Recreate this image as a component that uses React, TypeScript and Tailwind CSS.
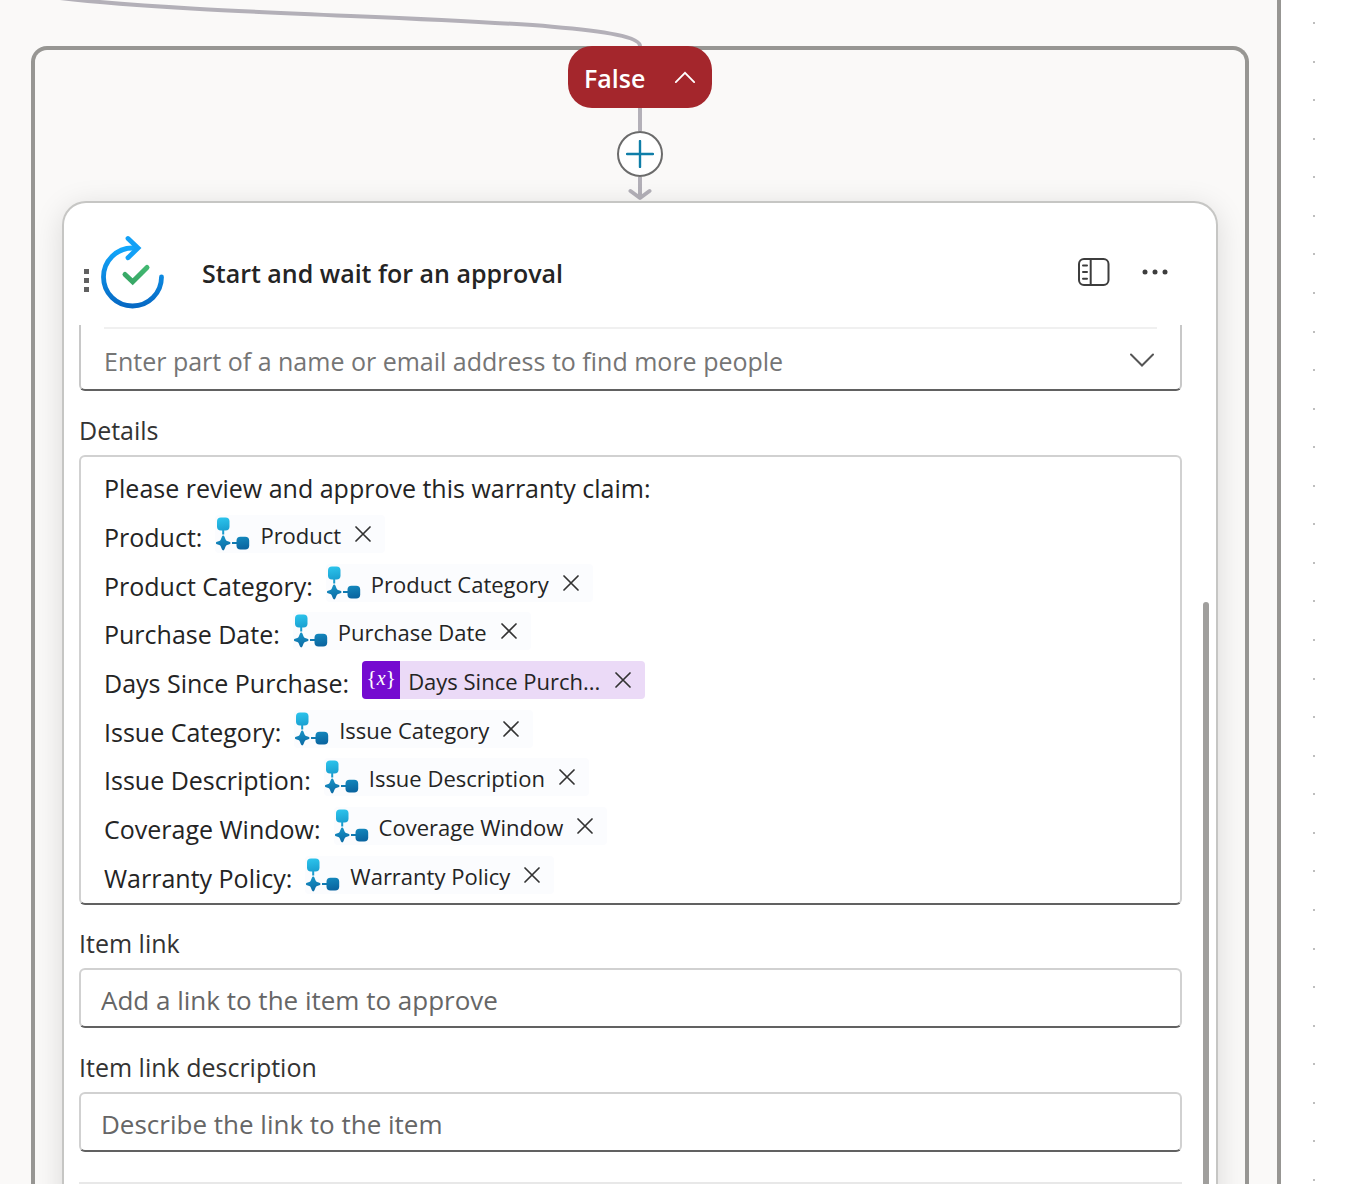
import { useId } from "react";

function Chevron({ up = false, className }: { up?: boolean; className: string }) {
  return (
    <svg viewBox="0 0 24 14" className={className} fill="none" stroke="currentColor" strokeWidth="2" strokeLinecap="round" aria-hidden="true">
      <path d={up ? "M2 12 12 2l10 10" : "M1 1.500 12 12.500 23 1.500"} />
    </svg>
  );
}

function ApprovalLogo() {
  return (
    <svg viewBox="0 0 66 74" className="h-[74px] w-[66px] shrink-0" fill="none" aria-hidden="true">
      <defs>
        <linearGradient id="ring" x1="0" y1="0" x2="0" y2="1">
          <stop offset="0" stopColor="#12a7fb" />
          <stop offset="1" stopColor="#0669c4" />
        </linearGradient>
        <linearGradient id="tick" x1="1" y1="0" x2="0" y2="1">
          <stop offset="0" stopColor="#42b871" />
          <stop offset="1" stopColor="#36a564" />
        </linearGradient>
      </defs>
      <path d="M36 13H32.500A29 29 0 1 0 61.500 42" stroke="url(#ring)" strokeWidth="4.800" strokeLinecap="round" />
      <path d="M28 3.500 38 13 28 22.800" stroke="#12a0f6" strokeWidth="4.800" strokeLinecap="round" strokeLinejoin="miter" />
      <path d="M25 39.500 32.700 46.800 47 32.500" stroke="url(#tick)" strokeWidth="5" strokeLinecap="round" />
    </svg>
  );
}

function FlowIcon() {
  const id = useId();
  return (
    <svg viewBox="0 0 34 34" className="h-[34px] w-[34px] shrink-0" aria-hidden="true">
      <defs>
        <linearGradient id={id} gradientUnits="userSpaceOnUse" x1="8" y1="0" x2="14" y2="34">
          <stop offset="0" stopColor="#2cc4ec" />
          <stop offset="0.4" stopColor="#1a9fd0" />
          <stop offset="1" stopColor="#0a65a0" />
        </linearGradient>
      </defs>
      <g fill={`url(#${id})`}>
        <rect x="1" y="0.500" width="12.500" height="13" rx="4" />
        <path d="M6.200 13h2v4.500h-2zM16 25h5v2h-5z" />
        <rect x="20.500" y="19.800" width="12.700" height="12.700" rx="4" />
        <path d="M7.200 18.500c.6 0 1 .4 1.300 1.200l1.100 2.700c.3.800.8 1.200 1.500 1.500l2.300.9c1.500.6 1.500 1.800 0 2.400l-2.300.9c-.7.300-1.200.8-1.500 1.500l-1.100 2.700c-.6 1.500-2 1.500-2.600 0l-1.100-2.700c-.3-.7-.8-1.200-1.500-1.500l-2.300-.9c-1.500-.6-1.500-1.800 0-2.400l2.300-.9c.7-.3 1.200-.7 1.500-1.500l1.100-2.700c.3-.8.700-1.200 1.300-1.200Z" />
      </g>
    </svg>
  );
}

function RemoveButton({ label, className }: { label: string; className: string }) {
  return (
    <button type="button" aria-label={`Remove ${label}`} className={className}>
      <svg viewBox="0 0 16 16" className="size-4" fill="none" stroke="#333" strokeWidth="1.700" strokeLinecap="round" aria-hidden="true">
        <path d="m1 1 14 14M15 1 1 15" />
      </svg>
    </button>
  );
}

function FlowToken({ label }: { label: string }) {
  return (
    <span className="mb-1.5 ml-[13px] flex h-[38px] items-center rounded bg-[#fbfcfe] pr-3.5 pl-px">
      <FlowIcon />
      <span className="ml-2.5 pt-0.5 text-[22px] leading-[34px]">{label}</span>
      <RemoveButton label={label} className="ml-3.5 flex" />
    </span>
  );
}

function VariableToken({ label }: { label: string }) {
  return (
    <span className="mb-1.5 ml-[13px] flex h-[38px] items-center overflow-hidden rounded bg-[#ebdaf7]">
      <span className="flex h-full w-[38px] items-center justify-center bg-[#750bd0] pb-1 font-['Liberation_Serif',serif] text-[22px] text-white">
        {"{"}
        <i className="text-[20px]">x</i>
        {"}"}
      </span>
      <span className="ml-2 w-[193px] whitespace-nowrap pt-0.5 text-[22px] leading-[34px]">{label}</span>
      <RemoveButton label={label} className="mx-3.5 flex" />
    </span>
  );
}

const claimFields = [
  { name: "Product" },
  { name: "Product Category" },
  { name: "Purchase Date" },
  { name: "Days Since Purchase", variable: "Days Since Purch..." },
  { name: "Issue Category" },
  { name: "Issue Description" },
  { name: "Coverage Window" },
  { name: "Warranty Policy" },
];

const inputClass =
  "mt-[7px] block h-[60px] w-full rounded-md border-2 border-[#d1d1d1] border-b-[#616161] bg-white pt-1 pl-5 text-[26px] text-[#242424] outline-none placeholder:text-[#666]";

export default function App() {
  return (
    <div className="flex h-screen overflow-hidden bg-white font-['Open_Sans',sans-serif] text-[#242424]">
      <main className="flex min-w-0 flex-1 border-r-4 border-[#979693] bg-[#faf9f8] pt-[46px] pr-7 pl-[31px]">
        <section className="relative min-w-0 flex-1 rounded-t-2xl border-4 border-b-0 border-[#979693] px-[27px]">
          <div className="relative -mt-1 flex flex-col items-center">
            <svg viewBox="0 0 640 46" className="absolute right-1/2 bottom-full h-[46px] w-[640px] overflow-visible" fill="none" aria-hidden="true">
              <path d="M60 -2C250 20 640 16 640 46" stroke="#b3b0b8" strokeWidth="4" />
            </svg>
            <button type="button" className="relative flex h-[62px] w-36 items-center justify-between rounded-3xl bg-[#a4262c] px-4 text-[25px] font-semibold text-white">
              <span className="pt-1">False</span>
              <Chevron up className="h-[13px] w-[22px]" />
            </button>
            <span className="h-[23px] w-1 bg-[#b3b0b8]" />
            <button type="button" aria-label="Insert a new step" className="flex size-[46px] items-center justify-center rounded-full border-2 border-[#6b6b6b] bg-white">
              <svg viewBox="0 0 28 28" className="size-7" stroke="#0f7ea8" strokeWidth="2.400" strokeLinecap="round" aria-hidden="true">
                <path d="M14 1v26M1 14h26" />
              </svg>
            </button>
            <svg viewBox="0 0 24 24" className="h-6 w-6" fill="none" stroke="#b3b0b8" strokeWidth="4" aria-hidden="true">
              <path d="M12 0v21" />
              <path d="m2.500 14 9.500 7 9.500-7" strokeLinecap="round" strokeLinejoin="round" />
            </svg>
          </div>

          <article className="relative h-full rounded-t-3xl border-2 border-b-0 border-[#c6c6c4] bg-white shadow-[0_6px_30px_rgba(0,0,0,0.13)]">
            <header className="flex h-[122px] items-center pt-4 pr-12 pl-5">
              <span className="mt-4 flex w-[5px] flex-col gap-1" aria-hidden="true">
                <span className="size-[5px] bg-[#616161]" />
                <span className="size-[5px] bg-[#616161]" />
                <span className="size-[5px] bg-[#616161]" />
              </span>
              <div className="ml-[11px] flex">
                <ApprovalLogo />
              </div>
              <h1 className="ml-9 pt-0.5 text-[25px] leading-9 font-semibold">Start and wait for an approval</h1>
              <button type="button" aria-label="Pin panel" className="ml-auto">
                <svg viewBox="0 0 32 28" className="h-7 w-8" fill="none" stroke="#3d3d3d" strokeWidth="2" aria-hidden="true">
                  <rect x="1" y="1" width="29.500" height="26" rx="5" />
                  <path d="M12.700 1v26" />
                  <path d="M5 7.500h4M5 14h4M5 20.700h4" strokeLinecap="round" />
                </svg>
              </button>
              <button type="button" aria-label="More commands" className="ml-8">
                <svg viewBox="0 0 26 6" className="h-1.5 w-[26px]" fill="#3d3d3d" aria-hidden="true">
                  <circle cx="3" cy="3" r="2.500" />
                  <circle cx="13" cy="3" r="2.500" />
                  <circle cx="23" cy="3" r="2.500" />
                </svg>
              </button>
            </header>

            <form className="pr-[34px] pl-[15px]">
              <div className="relative h-[66px] rounded-b-md border-2 border-t-0 border-[#c8c8c8] border-b-[#616161] px-[23px] pt-0.5">
                <div className="h-0.5 bg-[#f0f0f0]" />
                <input aria-label="Assigned to" placeholder="Enter part of a name or email address to find more people" className="block h-[60px] w-full pt-1 text-[25px] outline-none placeholder:text-[#757575]" />
                <Chevron className="absolute top-7 right-[26px] h-3.5 w-6 text-[#555]" />
              </div>

              <div id="details-label" className="mt-[21px] text-[25px] leading-9 text-[#333]">Details</div>
              <div
                role="textbox"
                aria-multiline="true"
                aria-labelledby="details-label"
                className="mt-[7px] flex h-[450px] flex-col rounded-md border-2 border-[#d1d1d1] border-b-[#616161] pt-[7px] pb-px pl-[23px] text-[25px] leading-9"
              >
                <p className="flex flex-1 items-center">Please review and approve this warranty claim:</p>
                {claimFields.map((field) => (
                  <div key={field.name} className="flex flex-1 items-center">
                    <span>{field.name}:</span>
                    {field.variable ? <VariableToken label={field.variable} /> : <FlowToken label={field.name} />}
                  </div>
                ))}
              </div>

              <label htmlFor="link" className="mt-5 block text-[25px] leading-9 text-[#333]">Item link</label>
              <input id="link" placeholder="Add a link to the item to approve" className={inputClass} />
              <label htmlFor="link-description" className="mt-[21px] block text-[25px] leading-9 text-[#333]">Item link description</label>
              <input id="link-description" placeholder="Describe the link to the item" className={inputClass} />
              <hr className="mt-[30px] border-t-2 border-[#e8e8e8]" />
            </form>
            <span className="absolute top-[399px] right-[7px] bottom-0 w-1.5 rounded-t-full bg-[#a09f9d]" aria-hidden="true" />
          </article>
        </section>
      </main>
      <aside className="flex w-[65px] flex-col justify-between pt-[22px] pb-[3px] pl-8" aria-hidden="true">
        {Array.from({ length: 31 }, (_, i) => (
          <span key={i} className="size-0.5 rounded-full bg-[#a8a8a8]" />
        ))}
      </aside>
    </div>
  );
}
